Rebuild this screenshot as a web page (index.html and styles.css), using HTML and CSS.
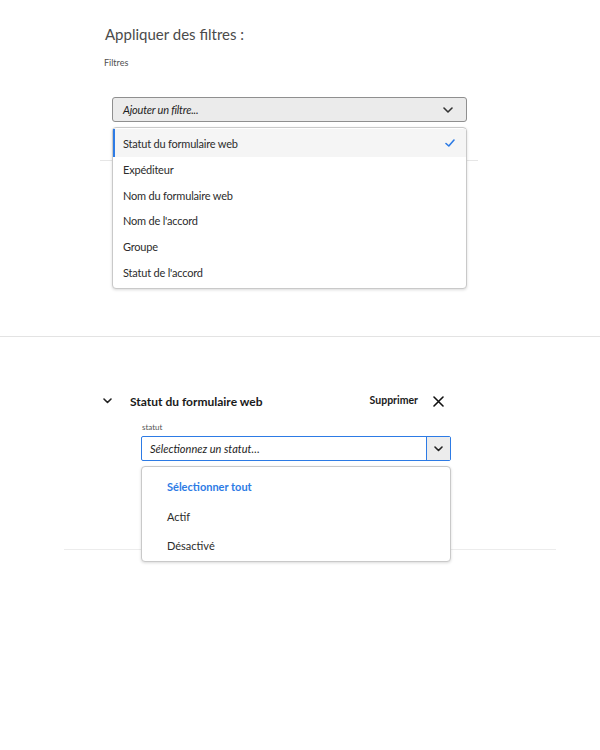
FILE: index.html
```html
<!DOCTYPE html>
<html lang="fr">
<head>
<meta charset="utf-8">
<title>Filtres</title>
<link rel="stylesheet" href="styles.css">
</head>
<body>
<section class="panel-add">
  <h2 class="panel-title">Appliquer des filtres :</h2>
  <div class="panel-label">Filtres</div>
  <div class="picker-wrap">
    <button class="picker" type="button">
      <span class="picker-text">Ajouter un filtre...</span>
      <svg class="chev" width="10" height="6" viewBox="0 0 10 6"><path d="M1 1 L5 5 L9 1" fill="none" stroke="#333" stroke-width="1.6" stroke-linecap="round" stroke-linejoin="round"/></svg>
    </button>
    <ul class="menu menu-filters">
      <li class="menu-item selected"><span>Statut du formulaire web</span>
        <svg class="check" width="10" height="8" viewBox="0 0 10 8"><path d="M1 4.5 L3.8 7 L9 1" fill="none" stroke="#2d7be5" stroke-width="1.6" stroke-linecap="round" stroke-linejoin="round"/></svg>
      </li>
      <li class="menu-item">Expéditeur</li>
      <li class="menu-item">Nom du formulaire web</li>
      <li class="menu-item">Nom de l'accord</li>
      <li class="menu-item">Groupe</li>
      <li class="menu-item">Statut de l'accord</li>
    </ul>
  </div>
  <div class="panel-divider"></div>
</section>

<hr class="page-sep">

<section class="panel-filter">
  <div class="filter-head">
    <svg class="head-chev" width="9" height="6" viewBox="0 0 9 6"><path d="M1 1 L4.5 4.5 L8 1" fill="none" stroke="#222" stroke-width="1.6" stroke-linecap="round" stroke-linejoin="round"/></svg>
    <span class="filter-name">Statut du formulaire web</span>
    <span class="filter-remove">Supprimer</span>
    <svg class="close" width="11" height="11" viewBox="0 0 11 11"><path d="M1 1 L10 10 M10 1 L1 10" fill="none" stroke="#111" stroke-width="1.6" stroke-linecap="round"/></svg>
  </div>
  <div class="filter-body">
    <div class="field-label">statut</div>
    <div class="combo-wrap">
      <div class="combo">
        <span class="combo-text">Sélectionnez un statut…</span>
        <span class="combo-btn">
          <svg width="9" height="6" viewBox="0 0 9 6"><path d="M1 1 L4.5 4.5 L8 1" fill="none" stroke="#222" stroke-width="1.6" stroke-linecap="round" stroke-linejoin="round"/></svg>
        </span>
      </div>
      <ul class="menu menu-status">
        <li class="status-item all">Sélectionner tout</li>
        <li class="status-item">Actif</li>
        <li class="status-item">Désactivé</li>
      </ul>
    </div>
  </div>
  <div class="panel-divider2"></div>
</section>
</body>
</html>
```
FILE: styles.css
```css
* { box-sizing: border-box; }
html, body { margin: 0; padding: 0; background: #fff; }
body {
  font-family: Lato, "Noto Sans", "Liberation Sans", sans-serif;
  color: #2c2c2c;
  width: 600px;
  height: 750px;
  overflow: hidden;
}
ul { list-style: none; margin: 0; padding: 0; }

.panel-add {
  margin-left: 100px;
  width: 378px;
  padding-top: 23px;
}
.panel-title {
  margin: 0 0 0 5px;
  font-size: 15px;
  line-height: 22px;
  font-weight: 400;
  color: #4b4b4b;
}
.panel-label {
  margin: 12px 0 0 4px;
  font-size: 9px;
  line-height: 12px;
  color: #505050;
}
.picker-wrap {
  position: relative;
  margin: 28px 11px 0 12px;
}
.picker {
  display: flex;
  align-items: center;
  justify-content: space-between;
  width: 100%;
  height: 25px;
  padding: 0 13px 0 10px;
  background: #ebebeb;
  border: 1px solid #8f8f8f;
  border-radius: 3px;
  font: inherit;
}
.picker-text {
  font-size: 11px;
  font-style: italic;
  color: #1d1d1d;
  letter-spacing: -0.2px;
}
.menu {
  position: absolute;
  left: 0;
  right: 0;
  background: #fff;
  border: 1px solid #c9c9c9;
  border-radius: 4px;
  box-shadow: 0 1px 3px rgba(0,0,0,0.15);
  z-index: 2;
}
.menu-filters {
  top: 30px;
  padding: 1px 0 3px;
}
.menu-item {
  display: flex;
  align-items: center;
  justify-content: space-between;
  height: 25.6px;
  padding: 0 11px 0 8px;
  font-size: 11px;
  letter-spacing: -0.2px;
  color: #2c2c2c;
  border-left: 2px solid transparent;
}
.menu-item.selected {
  background: #f5f5f5;
  border-left-color: #2d7be5;
  height: 28px;
}
.panel-divider {
  margin-top: 38px;
  height: 1px;
  background: #e6e6e6;
}

.page-sep {
  margin: 175px 0 0;
  border: 0;
  height: 1px;
  background: #e3e3e3;
}

.panel-filter {
  margin-left: 64px;
  width: 492px;
  padding-top: 55px;
}
.filter-head {
  display: flex;
  align-items: center;
  height: 18px;
  padding-left: 39px;
}
.head-chev { flex: none; }
.filter-name {
  margin-left: 18px;
  font-size: 12px;
  font-weight: 700;
  color: #1a1a1a;
}
.filter-remove {
  margin-left: auto;
  font-size: 10.5px;
  font-weight: 700;
  color: #1a1a1a;
  position: relative;
  top: -1px;
}
.close {
  margin: 0 112px 0 15px;
  flex: none;
}
.filter-body {
  padding: 0 105px 0 77px;
}
.field-label {
  margin: 12px 0 0 1px;
  font-size: 8px;
  line-height: 10px;
  color: #555;
}
.combo-wrap { position: relative; margin-top: 4px; }
.combo {
  display: flex;
  height: 25px;
  border: 1px solid #2d7be5;
  border-radius: 2px;
  background: #fff;
}
.combo-text {
  flex: 1;
  display: flex;
  align-items: center;
  padding-left: 8px;
  font-size: 11px;
  font-style: italic;
  color: #1d1d1d;
}
.combo-btn {
  width: 24px;
  display: flex;
  align-items: center;
  justify-content: center;
  background: #ececec;
  border-left: 1px solid #2d7be5;
}
.menu-status {
  top: 30px;
  padding: 5px 0 0;
}
.status-item {
  height: 29.5px;
  display: flex;
  align-items: center;
  padding-left: 25px;
  font-size: 11px;
  color: #2c2c2c;
}
.status-item.all {
  font-weight: 700;
  color: #2d7be5;
}
.panel-divider2 {
  margin-top: 88px;
  height: 1px;
  background: #ececec;
}
```
